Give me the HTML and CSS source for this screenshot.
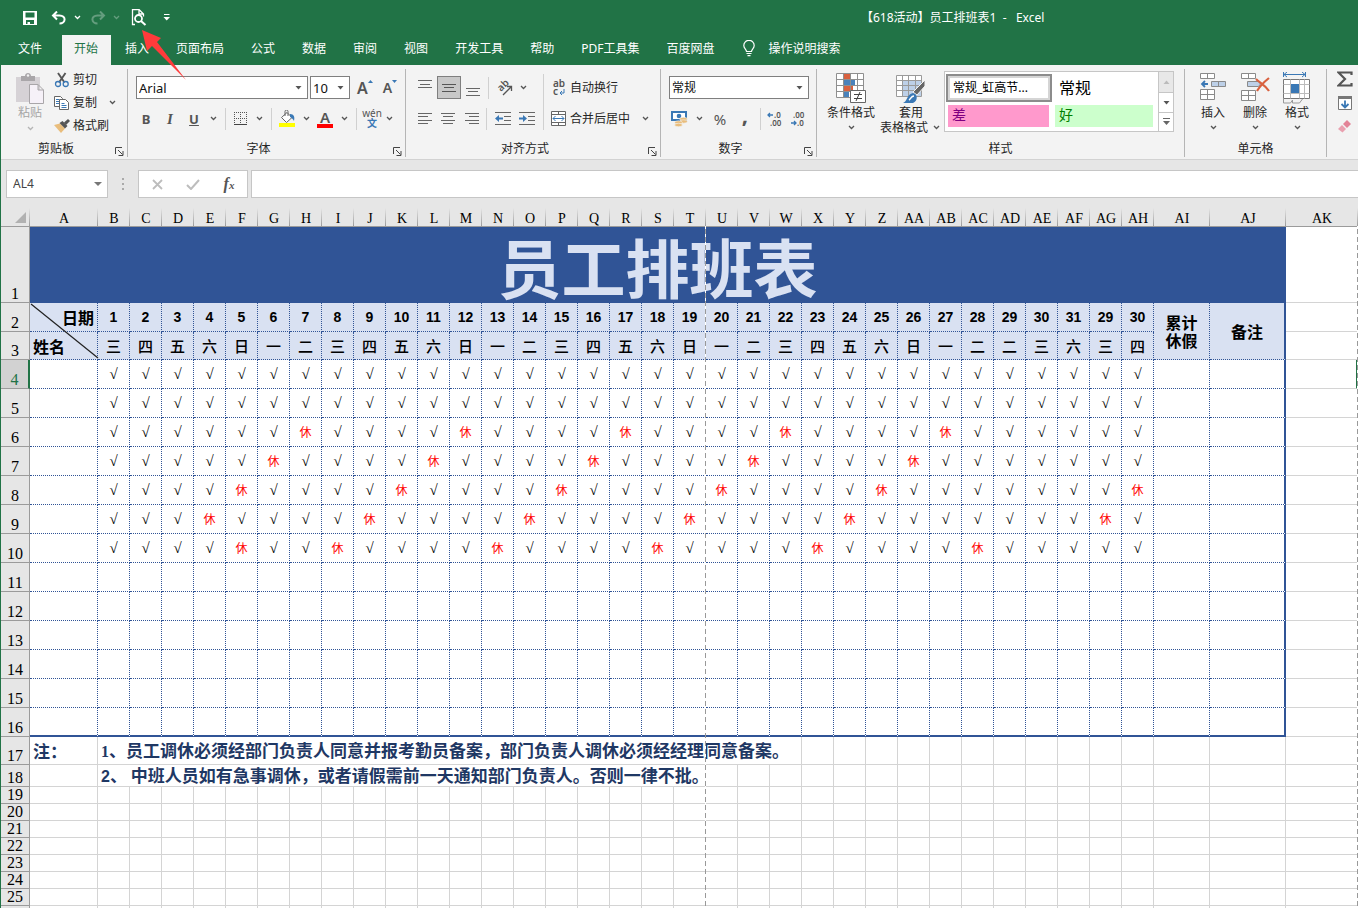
FILE: index.html
```html
<!DOCTYPE html>
<html lang="zh-CN">
<head>
<meta charset="utf-8">
<title>【618活动】员工排班表1 - Excel</title>
<link rel="stylesheet" href="styles.css">
</head>
<body>
<svg class="defs" aria-hidden="true">
  <symbol id="chev" viewBox="0 0 7 5"><path d="M1 1l2.500 2.500L6 1" fill="none" stroke="currentColor" stroke-width="1.300"/></symbol>
  <symbol id="tri" viewBox="0 0 7 4"><path d="M0.500 0h6L3.500 3.600z" fill="currentColor"/></symbol>
  <symbol id="launch" viewBox="0 0 9 9"><path d="M0.500 7V0.500H7M3 3l4.500 4.500M8 4v4.500H3.500" fill="none" stroke="currentColor"/></symbol>
</svg>
<div class="app">
  <header class="top">
    <div class="titlebar">
      <div class="quick">
        <button class="q q-save" aria-label="保存"><svg width="14" height="14" viewBox="0 0 14 14"><path fill="#fff" fill-rule="evenodd" d="M0 0h14v14H0zM2.500 1.500v5h9v-5zM3 9v4h1.500v-2H7v2h4V9z"/></svg></button>
        <button class="q q-undo" aria-label="撤销"><svg width="16" height="14" viewBox="0 0 16 14"><path d="M6 0.500L2 4.500l4 4M2 4.500h6.500c7 0 6.500 8 0 8" fill="none" stroke="#fff" stroke-width="2"/></svg></button>
        <button class="q q-chev" aria-label="撤销选项"><svg class="chev"><use href="#chev"/></svg></button>
        <button class="q q-undo dim" aria-label="恢复"><svg width="16" height="14" viewBox="0 0 16 14"><path d="M10 0.500l4 4-4 4M14 4.500H7.500c-7 0-6.500 8 0 8" fill="none" stroke="#fff" stroke-width="2"/></svg></button>
        <button class="q q-chev dim" aria-label="恢复选项"><svg class="chev"><use href="#chev"/></svg></button>
        <button class="q q-view" aria-label="打印预览"><svg width="16" height="17" viewBox="0 0 16 17" fill="none" stroke="#fff"><path d="M4 15.500H1.500V0.500H8L12.500 5v2.500M8 0.500V5h4.500" stroke-width="1.300"/><circle cx="7.500" cy="9.500" r="3.500" stroke-width="1.800"/><path d="M10 12l4.500 4" stroke-width="2"/></svg></button>
        <button class="q q-more" aria-label="自定义"><svg width="7" height="7" viewBox="0 0 7 7"><path d="M1 0.500h5.500" stroke="#fff"/><path d="M0.500 3h6.500L3.700 6.500z" fill="#fff"/></svg></button>
      </div>
      <h1 class="doc">【618活动】员工排班表1&nbsp; -&nbsp;&nbsp; Excel</h1>
    </div>
    <nav class="tabs">
      <button class="tab file">文件</button><button class="tab on">开始</button><button class="tab">插入</button><button class="tab">页面布局</button><button class="tab">公式</button><button class="tab">数据</button><button class="tab">审阅</button><button class="tab">视图</button><button class="tab">开发工具</button><button class="tab">帮助</button><button class="tab">PDF工具集</button><button class="tab">百度网盘</button>
      <button class="tab tell"><svg width="12" height="17" viewBox="0 0 12 17" fill="none" stroke="#fff" stroke-width="1.200"><path d="M3.500 11.500c0-2-2.700-3-2.700-6a5.200 5.200 0 0 1 10.400 0c0 3-2.700 4-2.700 6zM3.500 13.500h5M4.500 15.700h3"/></svg>操作说明搜索</button>
    </nav>
    <svg class="pointer" width="44" height="50" viewBox="0 0 44 50" aria-hidden="true"><path d="M0 0l19 8-4 4 29 38L10 16l-5 5z" fill="#ff3b3b"/></svg>
  </header>

  <div class="ribbon">
    <section class="group g-clip">
      <div class="body">
        <button class="paste"><svg width="30" height="32" viewBox="0 0 30 32"><path d="M1 4h24v25H1z" fill="#d6d2d6"/><path d="M6 3h4c0-4 6-4 6 0h4v5H6z" fill="#a9a6a9"/><circle cx="13" cy="2.500" r="1.200" fill="#f3f3f3"/><path d="M14.500 11.500H23l5.500 5.500v13.500h-14zM23 11.500V17h5.500" fill="#f6f1f8" stroke="#a9a6a9"/></svg><span>粘贴</span><svg class="chev"><use href="#chev"/></svg></button>
        <div class="cliplist">
          <button><svg width="16" height="16" viewBox="0 0 16 16" fill="none"><path d="M4 1l6.500 9.500M11.500 1L5 10.500" stroke="#555" stroke-width="1.900"/><circle cx="4" cy="12" r="2.500" stroke="#3a78b5" stroke-width="1.300"/><circle cx="11.700" cy="12" r="2.500" stroke="#3a78b5" stroke-width="1.300"/></svg>剪切</button>
          <button><svg width="16" height="16" viewBox="0 0 16 16" fill="#fff" stroke="#666"><path d="M0.500 1.500h6l2 2v8h-8z"/><path d="M5.500 4.500h6l3 3v7h-9z"/><path d="M2 4.500h3M2 6.500h3M2 8.500h3M7.500 8.500h3M7.500 10.500h5M7.500 12.500h5" stroke="#3a78b5"/></svg>复制<svg class="chev push"><use href="#chev"/></svg></button>
          <button><svg width="16" height="16" viewBox="0 0 16 16"><path d="M0 7l6-1.500 5 5L7 15z" fill="#e9bd7c"/><path d="M5.500 5l3-2 5 5-2.500 2.500z" fill="#555"/><path d="M10 4.500L14 1l2 2-4 4z" fill="#555"/></svg>格式刷</button>
        </div>
      </div>
      <footer><span>剪贴板</span><button aria-label="剪贴板设置"><svg class="launch"><use href="#launch"/></svg></button></footer>
    </section>

    <section class="group g-font">
      <div class="rows">
        <div class="row">
          <label class="combo c-font"><select aria-label="字体"><option>Arial</option></select><svg class="tri"><use href="#tri"/></svg></label>
          <label class="combo c-size"><select aria-label="字号"><option>10</option></select><svg class="tri"><use href="#tri"/></svg></label>
          <button class="w26" aria-label="增大字号"><b class="grow">A</b><svg class="up" width="5" height="3" viewBox="0 0 5 3"><path d="M0 3h5L2.500 0z" fill="#3a78b5"/></svg></button>
          <button class="w20" aria-label="减小字号"><b class="shrink">A</b><svg class="up" width="5" height="3" viewBox="0 0 5 3"><path d="M0 0h5L2.500 3z" fill="#3a78b5"/></svg></button>
        </div>
        <div class="row tools">
          <button class="w24"><b>B</b></button><button class="w24"><i>I</i></button><button class="w24"><u>U</u></button><button class="w14" aria-label="下划线"><svg class="chev"><use href="#chev"/></svg></button>
          <hr class="s10">
          <button class="w20" aria-label="边框"><svg width="13" height="13" viewBox="0 0 13 13"><path d="M0.500 0v12M6.500 0v12M12.500 0v12M0 0.500h13M0 6.500h13" stroke="#555" stroke-dasharray="1 1"/><path d="M0 12.500h13" stroke="#444"/></svg></button><button class="w18" aria-label="边框选项"><svg class="chev"><use href="#chev"/></svg></button>
          <hr class="s6">
          <button class="w26" aria-label="填充颜色"><svg width="17" height="17" viewBox="0 0 17 17"><path d="M2.500 7.500L8 2.500l5 5-5.500 5z" fill="#fff" stroke="#666"/><path d="M6 6V1.500a1.500 1.500 0 0 1 3 0V6" fill="none" stroke="#666"/><path d="M11 4c4 0 5 3 4 7-1-2-2-3-4-4z" fill="#3a78b5"/><path d="M0 13h16v4H0z" fill="#ff0"/></svg></button><button class="w12" aria-label="填充选项"><svg class="chev"><use href="#chev"/></svg></button>
          <button class="w26 fontcolor"><b>A</b></button><button class="w12" aria-label="字色选项"><svg class="chev"><use href="#chev"/></svg></button>
          <hr class="s12">
          <button class="w20 wen"><span>wén</span><em>文</em></button><button class="w14" aria-label="拼音选项"><svg class="chev"><use href="#chev"/></svg></button>
        </div>
      </div>
      <footer><span>字体</span><button aria-label="字体设置"><svg class="launch"><use href="#launch"/></svg></button></footer>
    </section>

    <section class="group g-align">
      <div class="body">
        <div class="rows">
          <div class="row">
            <button class="w24" aria-label="顶端对齐"><svg width="14" height="16" viewBox="0 0 14 16"><path d="M0 0.500h14M2 4.500h10M0 7.500h14" stroke="#666"/></svg></button>
            <button class="w24 pressed" aria-label="垂直居中"><svg width="14" height="16" viewBox="0 0 14 16"><path d="M0 4.500h14M2 7.500h10M0 11.500h14" stroke="#555"/></svg></button>
            <button class="w24" aria-label="底端对齐"><svg width="14" height="16" viewBox="0 0 14 16"><path d="M0 8.500h14M2 11.500h10M0 15.500h14" stroke="#666"/></svg></button>
            <hr class="s6">
            <button class="w26" aria-label="方向"><svg class="spill" width="17" height="16" viewBox="0 0 17 16"><text transform="translate(5 12) rotate(-45)" class="ab">ab</text><path d="M7 15l8-8M11 6.500h4.500V11" fill="none" stroke="#555" stroke-width="1.300"/></svg></button><button class="w12" aria-label="方向选项"><svg class="chev"><use href="#chev"/></svg></button>
          </div>
          <div class="row">
            <button class="w24" aria-label="左对齐"><svg width="14" height="11" viewBox="0 0 14 11"><path d="M0 0.500h14M0 3.500h10M0 7.500h14M0 10.500h10" stroke="#666"/></svg></button>
            <button class="w24" aria-label="居中"><svg width="14" height="11" viewBox="0 0 14 11"><path d="M0 0.500h14M2 3.500h10M0 7.500h14M2 10.500h10" stroke="#666"/></svg></button>
            <button class="w24" aria-label="右对齐"><svg width="14" height="11" viewBox="0 0 14 11"><path d="M0 0.500h14M4 3.500h10M0 7.500h14M4 10.500h10" stroke="#666"/></svg></button>
            <hr class="s6">
            <button class="w26" aria-label="减少缩进"><svg width="16" height="13" viewBox="0 0 16 13"><path d="M0 0.500h16M9 4.500h7M9 8.500h7M0 12.500h16" stroke="#666"/><path d="M0 6.500L4 3v2.500h4v2H4V10z" fill="#3a78b5"/></svg></button>
            <button class="w24" aria-label="增加缩进"><svg width="16" height="13" viewBox="0 0 16 13"><path d="M0 0.500h16M9 4.500h7M9 8.500h7M0 12.500h16" stroke="#666"/><path d="M8 6.500L4 3v2.500H0v2h4V10z" fill="#3a78b5"/></svg></button>
          </div>
        </div>
        <hr class="tall">
        <div class="rows">
          <div class="row"><button class="text"><svg class="spill" width="15" height="16" viewBox="0 0 15 16"><text x="2" y="7" class="ab">ab</text><text x="2" y="15" class="ab">c</text><path d="M13 9v4H9M11 11l-2 2 2 2" fill="none" stroke="#3a78b5"/></svg>自动换行</button></div>
          <div class="row"><button class="text"><svg width="15" height="15" viewBox="0 0 15 15"><path d="M0.500 0.500h14v14h-14zM0.500 3.500h14M0.500 11.500h14M7.500 0.500v3M7.500 11.500v3" fill="#fff" stroke="#666"/><path d="M2 7.500h11M4.500 5L2 7.500 4.500 10M10.500 5L13 7.500 10.500 10" fill="none" stroke="#3a78b5"/></svg>合并后居中<svg class="chev push"><use href="#chev"/></svg></button></div>
        </div>
      </div>
      <footer><span>对齐方式</span><button aria-label="对齐设置"><svg class="launch"><use href="#launch"/></svg></button></footer>
    </section>

    <section class="group g-num">
      <div class="rows">
        <div class="row"><label class="combo c-num"><select aria-label="数字格式"><option>常规</option></select><svg class="tri"><use href="#tri"/></svg></label></div>
        <div class="row">
          <button class="w24" aria-label="会计格式"><svg width="17" height="16" viewBox="0 0 17 16"><path d="M1 1h14v8H1z" fill="#fff" stroke="#3a78b5" stroke-width="2"/><circle cx="8" cy="5" r="2.300" fill="#3a78b5"/><ellipse cx="12.500" cy="8" rx="3.800" ry="1.700" fill="#e9bd7c" stroke="#f3f3f3" stroke-width=".6"/><ellipse cx="12.500" cy="10.500" rx="3.800" ry="1.700" fill="#e9bd7c" stroke="#f3f3f3" stroke-width=".6"/><ellipse cx="7.500" cy="11.500" rx="3.800" ry="1.700" fill="#e9bd7c" stroke="#f3f3f3" stroke-width=".6"/><ellipse cx="7.500" cy="14" rx="3.800" ry="1.700" fill="#e9bd7c" stroke="#f3f3f3" stroke-width=".6"/></svg></button><button class="w12" aria-label="会计选项"><svg class="chev"><use href="#chev"/></svg></button>
          <button class="w30 pct">%</button><button class="w20 comma">,</button>
          <hr class="s10">
          <button class="w20" aria-label="增加小数位"><svg class="spill" width="16" height="14" viewBox="0 0 16 14"><path d="M6 3H1M3 1L1 3l2 2" fill="none" stroke="#3a78b5" stroke-width="1.300"/><text x="7" y="6" class="dec">.0</text><text x="3" y="14" class="dec">.00</text></svg></button>
          <button class="w26" aria-label="减少小数位"><svg class="spill" width="16" height="14" viewBox="0 0 16 14"><path d="M1 11h5M4 9l2 2-2 2" fill="none" stroke="#3a78b5" stroke-width="1.300"/><text x="3" y="6" class="dec">.00</text><text x="7" y="14" class="dec">.0</text></svg></button>
        </div>
      </div>
      <footer><span>数字</span><button aria-label="数字设置"><svg class="launch"><use href="#launch"/></svg></button></footer>
    </section>

    <section class="group g-style">
      <div class="body">
        <button class="big b-cond"><svg width="30" height="32" viewBox="0 0 30 32"><path d="M0.500 1.500h27v24h-27z" fill="#fff"/><path d="M8 2h6v5H8zM8 13h9v6H8z" fill="#d9613f"/><path d="M8 8h11v5H8zM8 19h5v6H8z" fill="#4a82bb"/><path d="M0.500 1.500h27v24h-27zM0.500 7.500h27M0.500 13.500h27M0.500 19.500h27M7.500 1.500v24M14.500 1.500v24M21.500 1.500v24" fill="none" stroke="#8f8f8f"/><path d="M14.500 18.500h15v12h-15z" fill="#fff" stroke="#666"/><path d="M18 22.500h8M18 26.500h8M24 20l-4 9" stroke="#444"/></svg><span>条件格式</span><svg class="chev"><use href="#chev"/></svg></button>
        <button class="big b-table"><svg width="30" height="32" viewBox="0 0 30 32"><path d="M0.500 3.500h25v21h-25z" fill="#fff"/><path d="M7 9h18v15H7z" fill="#bdd0e8"/><path d="M0.500 3.500h25v21h-25zM0.500 8.500h25M0.500 13.500h25M0.500 18.500h25M6.500 3.500v21M12.500 3.500v21M19.500 3.500v21" fill="none" stroke="#9a9a9a"/><path d="M29 8v6l-8 9-4-3z" fill="#666" stroke="#f3f3f3"/><path d="M7 31c4-1 4-9 10-10 5 1 5 8 0 10z" fill="#3a78b5"/><path d="M13 28c2-1 2-4 5-4" stroke="#fff" fill="none" stroke-width="1.500"/></svg><span>套用</span><span class="second">表格格式<svg class="chev"><use href="#chev"/></svg></span></button>
        <div class="gallery">
          <div class="swatches">
            <button class="sw sel">常规_虹高节...</button><button class="sw norm">常规</button>
            <button class="sw bad">差</button><button class="sw good">好</button>
          </div>
          <div class="scroll">
            <button class="off" aria-label="上一行"><svg class="tri flip"><use href="#tri"/></svg></button>
            <button aria-label="下一行"><svg class="tri"><use href="#tri"/></svg></button>
            <button aria-label="更多样式"><svg width="7" height="8" viewBox="0 0 7 8"><path d="M0 0.500h7" stroke="#666"/><path d="M0 3h7L3.500 7z" fill="#666"/></svg></button>
          </div>
        </div>
      </div>
      <footer><span>样式</span></footer>
    </section>

    <section class="group g-cells">
      <div class="body">
        <button class="big b-cell"><svg width="30" height="32" viewBox="0 0 30 32" fill="#fff" stroke="#8a8a8a"><path d="M2.500 1.500h14v5h-14zM9.500 1.500v5M2.500 17.500h14v10h-14zM9.500 17.500v10M2.500 22.500h14"/><path d="M13.500 9.500h14v5h-14zM20.500 9.500v5" fill="#bdd0e8"/><path d="M10 12H4M7 9l-3 3 3 3" fill="none" stroke="#3a78b5" stroke-width="1.800"/></svg><span>插入</span><svg class="chev"><use href="#chev"/></svg></button>
        <button class="big b-cell"><svg width="30" height="32" viewBox="0 0 30 32" fill="#fff" stroke="#8a8a8a"><path d="M1.500 1.500h14v5h-14zM8.500 1.500v5M1.500 18.500h14v10h-14zM8.500 18.500v10M1.500 23.500h14"/><path d="M7.500 9.500h11l2 2.500-2 2.500h-11z" fill="#bdd0e8"/><path d="M16 7c4 4 9 6 13 12M29 6c-5 4-9 8-12 13" fill="none" stroke="#d9613f" stroke-width="2.200"/></svg><span>删除</span><svg class="chev"><use href="#chev"/></svg></button>
        <button class="big b-cell"><svg width="30" height="32" viewBox="0 0 30 32" fill="none"><path d="M1.500 0v5M23.500 0v5M2 2.500h21M5 0L2 2.500 5 5M20 0l3 2.500L20 5" stroke="#3a78b5"/><path d="M1.500 7.500h26v19h-26z" fill="#fff" stroke="#777"/><path d="M1.500 12.500h26M1.500 21.500h26M8.500 7.500v19M17.500 7.500v19M22.500 7.500v19" stroke="#bbb"/><path d="M9 12h8v9H9z" fill="#3a78b5"/><path d="M1.500 27v4h7l2-3v3h7l3-4" stroke="#999"/></svg><span>格式</span><svg class="chev"><use href="#chev"/></svg></button>
      </div>
      <footer><span>单元格</span></footer>
    </section>

    <section class="group g-edit">
      <button aria-label="自动求和"><svg width="16" height="16" viewBox="0 0 16 16"><path d="M14.500 4V1.500h-13L8 8l-6.500 6.500h13V12" fill="none" stroke="#555" stroke-width="2.200"/></svg></button>
      <button aria-label="填充"><svg width="16" height="16" viewBox="0 0 16 16"><path d="M1.500 1.500h13v13h-13z" fill="#fff" stroke="#777"/><path d="M1 1h14v3H1z" fill="#777"/><path d="M8 5.500V12M4.500 9L8 12.500 11.500 9" fill="none" stroke="#3a78b5" stroke-width="1.800"/></svg></button>
      <button aria-label="清除"><svg width="16" height="16" viewBox="0 0 16 16"><path d="M10 1l4 4-4 4-4-4z" fill="#e38397"/><path d="M5 6l4 4-3.500 3.500L1 10z" fill="#e9a0af"/></svg></button>
    </section>
  </div>

  <div class="formula">
    <label class="namebox"><input value="AL4" aria-label="名称框"><svg class="namearrow" width="8" height="4" viewBox="0 0 8 4"><path d="M0 0h8L4 4z" fill="#777"/></svg></label>
    <span class="dots"></span>
    <div class="fx">
      <button aria-label="取消"><svg width="11" height="11" viewBox="0 0 11 11"><path d="M1 1l9 9M10 1l-9 9" stroke="#bdbdbd" stroke-width="1.800"/></svg></button>
      <button aria-label="输入"><svg width="14" height="11" viewBox="0 0 14 11"><path d="M1 6l4 4 8-9" fill="none" stroke="#bdbdbd" stroke-width="2"/></svg></button>
      <button class="fn"><i>f<small>x</small></i></button>
    </div>
    <input class="entry" aria-label="编辑栏">
  </div>

  <main class="sheet"><table id="grid"></table></main>
</div>
<script src="app.js"></script>
</body>
</html>
```
FILE: styles.css
```css
* { box-sizing: border-box; }
body { margin: 0; font: 12px/16px "Noto Sans", "Noto Sans CJK SC", sans-serif; color: #262626; }
button { border: 0; padding: 0; margin: 0; background: none; font: inherit; color: inherit; }
button, .row { display: flex; align-items: center; }
button { justify-content: center; }
svg { flex: none; display: block; }
.spill { overflow: visible; }
.defs { position: absolute; width: 0; height: 0; }
.app { height: 100vh; overflow: hidden; display: flex; flex-direction: column; background: #fff; border-left: 1px solid #217346; }
.chev { width: 7px; height: 5px; color: #555; }
.tri { width: 7px; height: 4px; color: #555; }
.flip { transform: rotate(180deg); }
.launch { width: 9px; height: 9px; color: #444; }

.top { position: relative; background: #217346; color: #fff; }
.titlebar { height: 35px; display: flex; align-items: center; }
.quick { display: flex; align-items: center; padding-left: 22px; width: 860px; }
.q .chev { color: #fff; }
.q-undo { width: 16px; }
.q-save { margin-right: 14px; }
.q-chev { width: 20px; }
.q-view { margin-left: 5px; }
.q-more { margin-left: 16px; }
.q-undo + .q-chev + .q-undo { margin-left: 3px; }
.dim { opacity: .3; }
.doc { margin: 0; font-size: 12px; font-weight: 400; white-space: nowrap; }
.tabs { height: 30px; display: flex; gap: 1px; padding-left: 4px; }
.tab { padding: 0 13px 3px; white-space: nowrap; }
.file { margin-right: 6px; }
.tab.on { background: #f3f3f3; color: #217346; padding-left: 12px; }
.tell { gap: 13px; padding-left: 15px; }
.pointer { position: absolute; left: 141px; top: 30px; z-index: 3; }

.ribbon { display: flex; flex: none; height: 95px; padding: 4px 0 2px; background: #f3f3f3; border-bottom: 1px solid #d2d2d2; overflow: hidden; }
.group { flex: none; display: flex; flex-direction: column; justify-content: space-between; border-right: 1px solid #b5b5b5; }
.body { display: flex; }
.group footer { display: flex; align-items: center; height: 16px; }
.group footer span { flex: 1; text-align: center; }
.group footer button { width: 16px; align-self: flex-end; height: 12px; }
.rows { display: flex; flex-direction: column; gap: 8px; padding-top: 7px; }
.row { height: 23px; }
.row > button { height: 23px; color: #555; }
.w12 { width: 12px; } .w14 { width: 14px; } .w18 { width: 18px; } .w20 { width: 20px; }
.w24 { width: 24px; } .w26 { width: 26px; } .w30 { width: 30px; }
hr { flex: none; margin: 0; border: 0; height: 22px; background: linear-gradient(#d0d0d0, #d0d0d0) center / 1px 100% no-repeat; }
.s6 { width: 6px; } .s10 { width: 10px; } .s12 { width: 12px; }

.g-clip { width: 127px; }
.g-clip .body { padding-left: 12px; }
.paste { flex-direction: column; justify-content: flex-start; width: 34px; color: #a6a6a6; padding-top: 4px; }
.paste .chev { color: #b5b5b5; margin-top: 5px; }
.cliplist { padding-left: 7px; margin-top: -1px; }
.cliplist button { height: 23px; gap: 3px; }
.push { margin-left: 9px; }

.g-font { width: 278px; }
.g-font .rows { padding-left: 6px; }
.g-font .row:first-child { padding-left: 2px; gap: 2px; }
.combo { display: flex; align-items: center; height: 23px; border: 1px solid #7f7f7f; background: #fff; padding-right: 5px; }
.combo select { appearance: none; border: 0; outline: 0; background: none; flex: 1; min-width: 0; padding: 0 0 0 2px; font: 13px/18px "Noto Sans", "Noto Sans CJK SC", sans-serif; color: #111; }
.c-num select { font-size: 12px; }
.c-font { width: 172px; } .c-size { width: 40px; } .c-num { width: 140px; }
.grow { font-size: 16px; } .shrink { font-size: 14px; }
.grow, .shrink { font-weight: 600; }
.up { align-self: flex-start; margin-top: 4px; }
.tools b, .tools u, .tools i { font-size: 13px; font-weight: 700; }
.tools i { font-family: "Liberation Serif", serif; font-size: 15px; }
.tools .fontcolor b { width: 16px; line-height: 14px; border-bottom: 4px solid #f00; font-size: 15px; font-weight: 600; }
.wen { flex-direction: column; }
.wen span { font-size: 10px; line-height: 9px; }
.wen em { font-style: normal; font-size: 10px; line-height: 11px; color: #3a78b5; font-weight: 700; }

.g-align { width: 255px; }
.g-align .body { padding-left: 7px; }
.pressed { background: #c8c8c8; outline: 1px solid #7f7f7f; outline-offset: -1px; }
.tall { width: 16px; height: 56px; align-self: center; margin: 4px 0 0 -4px; }
.g-align .rows:first-child { width: 126px; }
.text { gap: 4px; }
.row > .text { color: #262626; }
.text .push { margin-left: 8px; }
.ab { font: 600 10px "Noto Sans", sans-serif; fill: #555; }
.dec { font: 600 8px "Noto Sans", sans-serif; fill: #555; }
.g-num { width: 156px; }
.g-num .rows { padding-left: 8px; }
.g-num .row:last-child button:first-child { justify-content: flex-start; padding-left: 2px; }
.pct { font-size: 15px; }
.comma { font-size: 22px; font-weight: 700; padding-bottom: 10px; }

.big { flex-direction: column; justify-content: flex-start; padding-top: 3px; }
.big > svg:first-child { margin-bottom: 1px; }
.big > .chev { margin-top: 5px; }
.big span { line-height: 15px; white-space: nowrap; }
.second { display: flex; align-items: center; gap: 5px; }
.g-style { width: 368px; }
.b-cond { width: 60px; margin-left: 4px; }
.b-table { width: 60px; }
.b-table .second { padding-left: 0; margin-left: -2px; }
.gallery { display: flex; flex: none; width: 230px; height: 61px; margin: 2px 0 0 3px; border: 1px solid #c6c6c6; background: #fff; }
.swatches { flex: 1; display: grid; grid-template-columns: 106px 100px; grid-template-rows: 28px 22px; row-gap: 3px; column-gap: 1px; padding: 2px 1px; }
.sw { justify-content: flex-start; color: #000; white-space: nowrap; }
.sel { border: 2px solid #8c8c8c; outline: 2px solid #d5d5d5; outline-offset: -4px; padding-left: 5px; }
.norm { padding-left: 6px; font-size: 16px; }
.bad, .good { font-size: 14px; padding: 0 4px 3px; }
.bad { background: #ff99cc; color: #800080; margin: 0 3px 0 2px; }
.good { background: #ccffcc; color: #008000; margin-left: 2px; }
.scroll { width: 15px; display: grid; grid-template-rows: 20px 20px 19px; border-left: 1px solid #c6c6c6; }
.scroll button + button { border-top: 1px solid #c6c6c6; }
.scroll .off { background: #e8e8e8; }
.scroll .off .tri { color: #bbb; }
.g-cells { width: 142px; }
.g-cells .body { padding-left: 7px; }
.b-cell { width: 42px; }
.g-edit { border: 0; justify-content: flex-start; gap: 8px; padding: 2px 0 0 10px; }

.formula { flex: none; display: flex; height: 48px; padding: 10px 0; background: #e6e6e6; }
.formula input { border: 0; outline: 0; background: none; padding: 0 6px; font: 12px/18px "Noto Sans", sans-serif; color: #444; min-width: 0; }
.namebox, .fx, .formula .entry { border: 1px solid #c6c6c6; background: #fff; }
.namebox { display: flex; align-items: center; width: 102px; margin-left: 5px; padding-right: 5px; }
.namebox input { flex: 1; }
.dots { width: 30px; background: repeating-linear-gradient(#aaa 0 2px, transparent 2px 5px) center / 2px 12px no-repeat; }
.fx { display: flex; width: 110px; margin-right: 3px; }
.fx button { flex: 1; }
.fn { font: 700 16px "Liberation Serif", serif; color: #555; }
.fn small { font-size: 11px; }
.formula .entry { flex: 1; border: 1px solid #c6c6c6; border-right: 0; background: #fff; }

.sheet { flex: 1; min-height: 0; overflow: hidden; }
#grid { table-layout: fixed; border-collapse: separate; border-spacing: 0; width: 1357px; }
#grid th, #grid td { padding: 0; font-weight: 400; white-space: nowrap; border: solid #d4d4d4; border-width: 0 1px 1px 0; }
.c-row { width: 29px; } .c-a { width: 68px; } .c-day { width: 32px; } .c-ai { width: 56px; } .c-aj { width: 76px; } .c-ak { width: 72px; }
#grid .col { position: relative; height: 19px; background: linear-gradient(#e6e6e6, #9b9b9b) right / 1px 100% no-repeat #e6e6e6; border-width: 0 0 1px; border-color: #9b9b9b; font: 14px/15px "Liberation Serif", serif; color: #000; vertical-align: bottom; }
#grid .rowno { background: #e6e6e6; border-color: #9b9b9b; font: 16px/16px "Liberation Serif", serif; color: #000; vertical-align: bottom; text-align: center; }
#grid .rowno.cur { background: #d2d2d2; color: #217346; border-right: 2px solid #217346; }
.corner svg { margin-left: 14px; margin-bottom: 3px; }
.break { position: absolute; right: 0; top: 100%; width: 1px; height: 100vh; z-index: 2; background: repeating-linear-gradient(#fff 0 3px, #999 3px 8px); }
#grid .banner { background: #305496; border-color: #305496; color: #d9e1f2; text-align: center; font: 700 64px/70px "Noto Sans CJK SC", sans-serif; }
#grid .dot { border-style: dotted; border-color: #305496; text-align: center; }
#grid .head { background: #d9e1f2; color: #000; font: 700 16px/18px "Noto Sans CJK SC", sans-serif; }
#grid .day { font-size: 15px; font-weight: 500; }
#grid .num { font: 700 14px/18px "Liberation Sans", sans-serif; }
#grid .axis { padding: 0 3px; text-align: right; }
#grid .corner-cell { position: relative; }
#grid .axis.left { text-align: left; }
.slash { position: absolute; left: 0; top: 0; }
#grid .wrap { white-space: pre; }
#grid .last { border-right: 2px solid #305496; }
#grid .end td:not(.free) { border-bottom: 2px solid #305496; }
#grid .tick { font: italic 15px/16px "Liberation Serif", serif; color: #000; }
#grid .off { color: #f00; font: 12px/16px "Noto Sans CJK SC", sans-serif; }
#grid .edge { border-right: 2px solid #217346; }
#grid .note { color: #1f3864; font: 700 17px/20px "Noto Sans CJK SC", sans-serif; padding-left: 3px; text-align: left; }
.note b { font: 700 16px "Liberation Serif", serif; }
.note strong { font: 700 16px "Liberation Sans", sans-serif; }
```
FILE: app.js
```js
const letters = 'A B C D E F G H I J K L M N O P Q R S T U V W X Y Z AA AB AC AD AE AF AG AH AI AJ AK'.split(' ');
const week = [...'三四五六日一二三四五六日一二三四五六日一二三四五六日一二二三六三四'];
const days = [...Array(31).keys()].map(i => i + 1).concat(29, 30);
const rest = {
  6: [6, 11, 16, 21, 26],
  7: [5, 10, 15, 20, 25],
  8: [4, 9, 14, 19, 24, 32],
  9: [3, 8, 13, 18, 23, 31],
  10: [4, 7, 12, 17, 22, 27]
};
const heights = { 1: 76, 3: 28, 17: 28, 18: 21 };
const td = (cls, text = '', attrs = '') => `<td class="${cls}" ${attrs}>${text}</td>`;
const free = n => td('free').repeat(n);

let html = '<colgroup><col class="c-row"><col class="c-a">' + '<col class="c-day">'.repeat(33) +
  '<col class="c-ai"><col class="c-aj"><col class="c-ak"></colgroup>';
html += '<tr><th class="col corner"><svg width="11" height="11" viewBox="0 0 11 11"><path d="M11 0v11H0z" fill="#b1b1b1"/></svg></th>';
html += letters.map(l => `<th class="col">${l}${l === 'T' || l === 'AK' ? '<span class="break"></span>' : ''}</th>`).join('') + '</tr>';

for (let r = 1; r <= 26; r++) {
  const h = heights[r] || (r <= 16 ? 29 : 17);
  html += `<tr class="${r === 16 ? 'end' : ''}" style="height:${h}px"><th class="rowno ${r === 4 ? 'cur' : ''}">${r}</th>`;
  if (r === 1) {
    html += td('banner', '员工排班表', 'colspan="36"') + free(1);
  } else if (r === 2) {
    html += td('dot head axis corner-cell', '日期<svg class="slash" width="69" height="56" viewBox="0 0 69 56"><path d="M1 1l67 54" stroke="#222" stroke-width="1.200"/></svg>');
    html += days.map(d => td('dot head num', d)).join('');
    html += td('dot head wrap', '累计\n休假', 'rowspan="2"') + td('dot head last', '备注', 'rowspan="2"') + free(1);
  } else if (r === 3) {
    html += td('dot head axis left', '姓名') + week.map(d => td('dot head day', d)).join('') + free(1);
  } else if (r <= 16) {
    html += td('dot');
    for (let c = 0; c < 33; c++) {
      const off = rest[r] && rest[r].includes(c);
      html += r > 10 ? td('dot') : td(off ? 'dot off' : 'dot tick', off ? '休' : '√');
    }
    html += td('dot') + td('dot last') + td(r === 4 ? 'free edge' : 'free');
  } else if (r === 17) {
    html += td('note', '注：') + td('note', '<b>1</b>、员工调休必须经部门负责人同意并报考勤员备案，部门负责人调休必须经经理同意备案。', 'colspan="22"') + free(14);
  } else if (r === 18) {
    html += free(1) + td('note', '<strong>2</strong>、 中班人员如有急事调休，或者请假需前一天通知部门负责人。否则一律不批。', 'colspan="19"') + free(17);
  } else {
    html += free(37);
  }
  html += '</tr>';
}
document.getElementById('grid').innerHTML = html;
```
